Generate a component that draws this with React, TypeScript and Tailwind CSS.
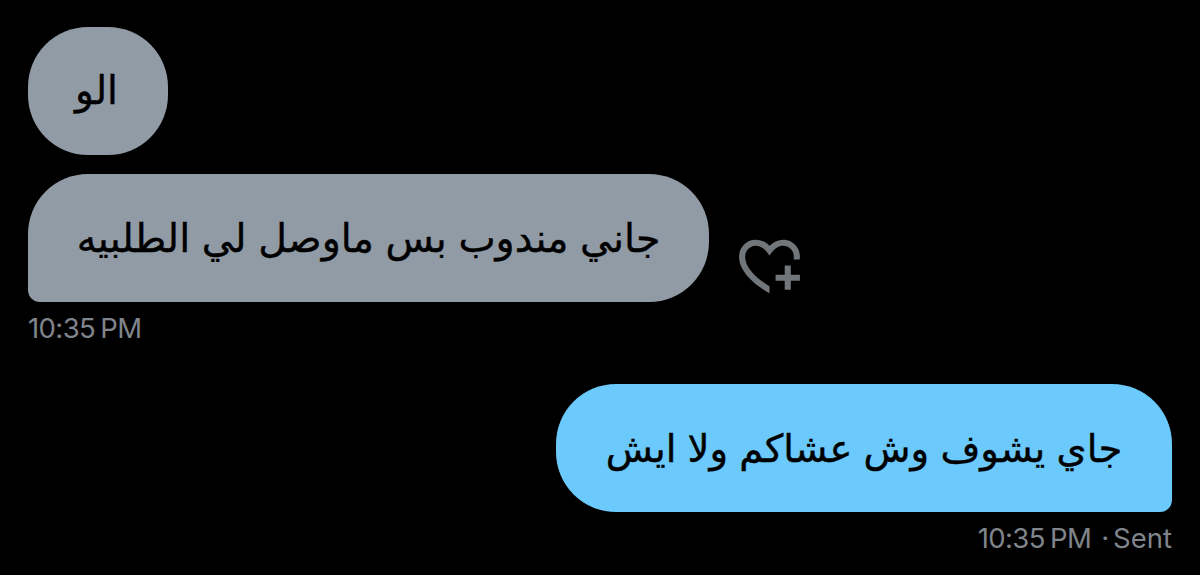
import React from 'react';

interface BubbleProps {
  className: string;
  children: React.ReactNode;
}

const Bubble: React.FC<BubbleProps> = ({ className, children }) => (
  <div
    dir="rtl"
    className={`flex h-32 items-center justify-center whitespace-nowrap text-black [-webkit-text-stroke:0.4px_black] ${className}`}
  >
    {children}
  </div>
);

const HeartPlus: React.FC = () => (
  <svg viewBox="0 0 24 24" className="size-[73px] fill-[#71767b]">
    <path d="M17 12v3h-2.998v2h3v3h2v-3h3v-2h-3.001V12H17zm-5 6.839c-3.871-2.34-6.053-4.639-7.127-6.609-1.112-2.04-1.031-3.7-.479-4.82.561-1.13 1.667-1.84 2.91-1.91 1.222-.06 2.68.51 3.892 2.16l.806 1.09.805-1.09c1.211-1.65 2.668-2.22 3.89-2.16 1.242.07 2.347.78 2.908 1.91.334.677.49 1.554.321 2.59h2.011c.153-1.283-.039-2.469-.539-3.48-.887-1.79-2.647-2.91-4.601-3.01-1.65-.09-3.367.56-4.796 2.01-1.43-1.45-3.147-2.1-4.798-2.01-1.954.1-3.714 1.22-4.601 3.01-.896 1.81-.846 4.17.514 6.67 1.353 2.48 4.003 5.12 8.382 7.67l.502.299v-2.32z" />
  </svg>
);

const Timestamp: React.FC<{ status?: string }> = ({ status }) => (
  <div className="flex font-['Inter',sans-serif] text-[27.5px] leading-8 text-[#80858c]">
    <span className="tracking-[-0.6px] [word-spacing:-2px]">10:35 PM</span>
    {status && (
      <>
        <span className="mr-1 ml-2.5">·</span>
        <span>{status}</span>
      </>
    )}
  </div>
);

export default function App() {
  return (
    <main className="flex h-[575px] w-[1200px] flex-col overflow-hidden bg-black px-7 pt-[27px] font-['DejaVu_Sans',sans-serif]">
      <Bubble className="w-[140px] rounded-[60px] bg-[#919ba5] pr-[3px] text-[39px]">الو</Bubble>

      <div className="mt-[19px] flex items-end">
        <Bubble className="w-[681px] rounded-[60px] rounded-bl-xl bg-[#919ba5] pt-px text-[39.5px] [word-spacing:-1px]">
          جاني مندوب بس ماوصل لي الطلبيه
        </Bubble>
        <div className="ml-6">
          <HeartPlus />
        </div>
      </div>

      <div className="mt-2.5">
        <Timestamp />
      </div>

      <Bubble className="mt-10 w-[616px] self-end rounded-[60px] rounded-br-xl bg-[#6bc9fb] pt-0.5 text-[38.5px] [word-spacing:-1px]">
        جاي يشوف وش عشاكم ولا ايش
      </Bubble>

      <div className="mt-2.5 self-end">
        <Timestamp status="Sent" />
      </div>
    </main>
  );
}
